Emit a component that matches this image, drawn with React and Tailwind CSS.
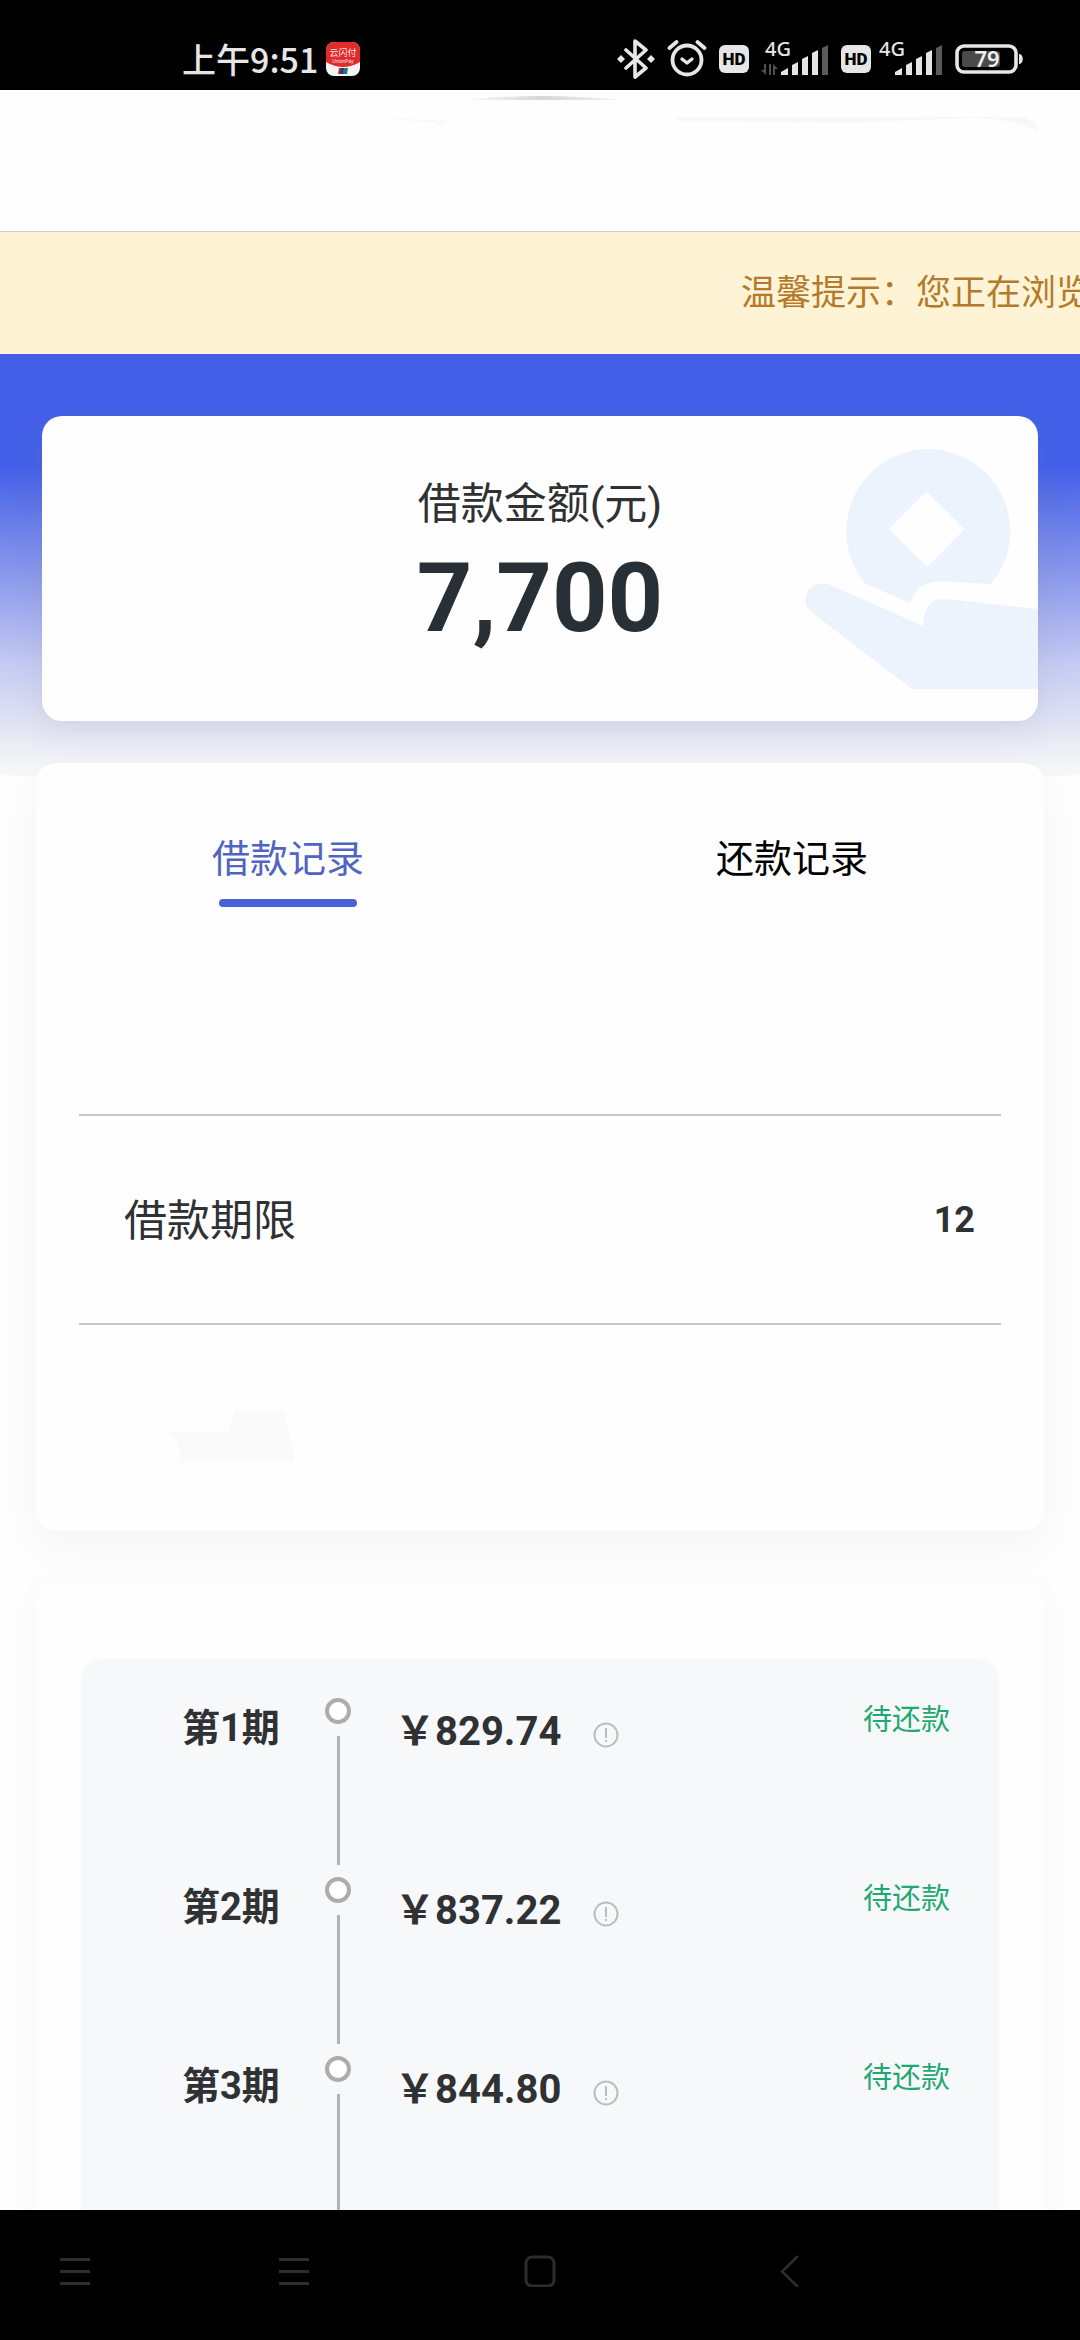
const installments = [
  { period: "第1期", amount: "829.74", status: "待还款" },
  { period: "第2期", amount: "837.22", status: "待还款" },
  { period: "第3期", amount: "844.80", status: "待还款" },
];

function AppBadge() {
  return (
    <svg className="size-[34px]" viewBox="0 0 34 34" aria-hidden="true">
      <rect width="34" height="34" rx="8" fill="#f4f4f4" />
      <path d="M0 20V8a8 8 0 0 1 8-8h18a8 8 0 0 1 8 8v12q-17 10-34 0Z" fill="#e02a2c" />
      <text x="17" y="14" textAnchor="middle" fontSize="9" fill="#fbe3e0" fontFamily="'Noto Sans CJK SC', sans-serif">
        云闪付
      </text>
      <text x="17" y="21" textAnchor="middle" fontSize="5" fill="#fbe3e0" fontFamily="Roboto, sans-serif">
        UnionPay
      </text>
      <path d="M13 26h4l-1 6h-4Z" fill="#b5303f" />
      <path d="M15 26h4l-1 6h-4Z" fill="#27406b" />
      <path d="M18 26h4l-1 6h-4Z" fill="#1f7a80" />
    </svg>
  );
}

function Bluetooth() {
  return (
    <svg className="h-[40px] w-[38px]" viewBox="0 0 38 40" fill="none" aria-hidden="true">
      <path d="M9 11l20 18-11 9V2l11 9L9 29" stroke="#e6e6e6" strokeWidth="3.6" strokeLinejoin="round" strokeLinecap="round" />
      <path d="M4 16l4 4-4 4-4-4ZM34 16l4 4-4 4-4-4Z" fill="#e6e6e6" />
    </svg>
  );
}

function Alarm() {
  return (
    <svg className="h-[40px] w-[40px]" viewBox="0 0 40 40" fill="none" stroke="#e6e6e6" strokeLinecap="round" strokeLinejoin="round" aria-hidden="true">
      <circle cx="20" cy="21" r="14.500" strokeWidth="3.800" />
      <path d="M15 20l5 4 5-4" strokeWidth="3.400" />
      <path d="M2.500 9l7-6M37.500 9l-7-6" strokeWidth="3.800" />
    </svg>
  );
}

function HdBadge() {
  return (
    <span className="flex h-7 w-[30px] items-center justify-center rounded-md bg-[#e6e6e6] text-[17px] leading-none font-black text-black">
      HD
    </span>
  );
}

function Signal({ data }) {
  return (
    <svg className={data ? "h-[42px] w-[68px]" : "h-[42px] w-[64px]"} viewBox={data ? "0 0 68 42" : "4 0 64 42"} aria-label="4G">
      <text x="4" y="18" fontSize="20" fontWeight="500" fill="#e6e6e6" fontFamily="'Noto Sans', sans-serif">
        4G
      </text>
      {data && <path d="M5 26v11l-5-5h3v-6ZM8 26v11h2V26ZM12 37V26l5 5h-3v6Z" fill="#505050" />}
      <path d="M20 37v-3l7-4v7ZM31 37V27l6-3v13ZM41 37V21l6-3v19ZM51 37V15l6-3v25Z" fill="#e6e6e6" />
      <path d="M61 37V10l6-3v30Z" fill="#5a5a5a" />
    </svg>
  );
}

function Battery() {
  return (
    <svg className="h-[30px] w-[68px]" viewBox="0 0 68 30" aria-label="79%">
      <rect x="2" y="2" width="59" height="26" rx="7" fill="none" stroke="#e6e6e6" strokeWidth="3.600" />
      <rect x="7" y="7" width="38" height="16" rx="3" fill="#4a4a4a" />
      <path d="M64 10c5 0 5 10 0 10Z" fill="#e6e6e6" />
      <text x="32" y="23" textAnchor="middle" fontSize="22" fontWeight="600" fill="#efefef" fontFamily="'Noto Sans', sans-serif">
        79
      </text>
    </svg>
  );
}

function StatusBar() {
  return (
    <header className="flex h-[90px] shrink-0 items-center justify-between bg-black pt-7 pr-[57px] pl-[182px]">
      <div className="flex items-center gap-2">
        <time className="text-[34px] leading-[34px] font-medium text-[#e6e6e6] [font-family:'Noto_Sans_CJK_SC',sans-serif]">
          上午9:51
        </time>
        <AppBadge />
      </div>
      <div className="flex items-center gap-3">
        <Bluetooth />
        <Alarm />
        <HdBadge />
        <Signal data />
        <div className="flex items-center gap-2">
          <HdBadge />
          <Signal />
        </div>
        <Battery />
      </div>
    </header>
  );
}

function CoinInHand() {
  return (
    <svg className="absolute top-8 right-0 h-[242px] w-[235px]" viewBox="130 112 705 726" aria-hidden="true">
      <path
        fill="#edf3fd"
        fillRule="evenodd"
        d="M318 520A246 246 0 1 1 694 520L545 512Q470 512 453 578ZM500 243 388 355 503 468 615 355Z"
      />
      <path fill="#edf3fd" d="M215 524 490 646Q494 564 550 564L835 595V836H458L155 605Q125 575 145 540 170 508 215 524Z" />
    </svg>
  );
}

function InfoIcon() {
  return (
    <svg className="size-[26px]" viewBox="0 0 26 26" fill="none" stroke="#bdbdbd" aria-hidden="true">
      <circle cx="13" cy="13" r="11.500" strokeWidth="2" />
      <path d="M13 6v10M13 18v2" strokeWidth="2" />
    </svg>
  );
}

function Installment({ period, amount, status }) {
  return (
    <li className="flex h-[179px] items-start pr-[49px] pl-[101px]">
      <span className="w-[143px] pt-[6px] text-[38px] leading-[48px] font-bold">{period}</span>
      <span className="flex w-[26px] shrink-0 flex-col items-center gap-3" aria-hidden="true">
        <i className="size-[26px] rounded-full border-4 border-[#acacac] bg-white" />
        <i className="h-[129px] w-[3px] bg-[#b3b3b3]" />
      </span>
      <span className="ml-11 flex items-start gap-8 pt-[10px] text-[40px] leading-[48px] font-bold">
        <span>￥{amount}</span>
        <button type="button" aria-label={period + "详情"} className="mt-[14px]">
          <InfoIcon />
        </button>
      </span>
      <span className="ml-auto pt-[2px] text-[29px] leading-[40px] text-[#1fa871]">{status}</span>
    </li>
  );
}

function NavBar() {
  return (
    <nav className="flex h-[130px] shrink-0 items-start bg-black pt-[45px] pl-[59px] text-[#2d2d2d]">
      <button type="button" aria-label="菜单" className="mr-[187px]">
        <svg className="size-8" viewBox="0 0 32 32" stroke="currentColor" strokeWidth="3">
          <path d="M1 4.500h30M1 16.500h30M1 28.500h30" />
        </svg>
      </button>
      <button type="button" aria-label="最近任务" className="mr-[214px]">
        <svg className="size-8" viewBox="0 0 32 32" stroke="currentColor" strokeWidth="3">
          <path d="M1 4.500h30M1 16.500h30M1 28.500h30" />
        </svg>
      </button>
      <button type="button" aria-label="主屏幕" className="mr-[218px]">
        <svg className="size-8" viewBox="0 0 32 32" fill="none" stroke="currentColor" strokeWidth="3">
          <rect x="2" y="2" width="28" height="29" rx="6" />
        </svg>
      </button>
      <button type="button" aria-label="返回">
        <svg className="size-8" viewBox="0 0 32 32" fill="none" stroke="currentColor" strokeWidth="2.600">
          <path d="M24 1 8 16.500 24 32" />
        </svg>
      </button>
    </nav>
  );
}

export default function App() {
  return (
    <div className="flex h-screen flex-col bg-[#fdfdfd] text-[#2f3133] [font-family:Roboto,'Noto_Sans_CJK_SC',sans-serif]">
      <StatusBar />
      <main className="min-h-0 flex-1 overflow-x-hidden overflow-y-auto [scrollbar-width:none]">
        <div className="h-[142px] border-b border-[#cfcbc8] bg-[#fefefe]">
          <svg className="h-[60px] w-full" viewBox="0 0 1080 60" aria-hidden="true">
            <defs>
              <linearGradient id="edge" x1="0" x2="1" y1="0" y2="0">
                <stop offset="0" stopColor="#d6d6d6" stopOpacity="0" />
                <stop offset="0.5" stopColor="#d6d6d6" />
                <stop offset="1" stopColor="#d6d6d6" stopOpacity="0.3" />
              </linearGradient>
            </defs>
            <path d="M460 10Q540 2 622 10Z" fill="url(#edge)" />
            <path d="M365 27 450 31 430 40 440 33ZM675 27H1025Q1036 30 1038 41 1010 28 970 28L850 33 680 31Z" fill="#f8f8f8" />
          </svg>
        </div>
        <div className="flex h-[122px] items-center overflow-hidden bg-[#fef3d5] pt-[2px] pl-[741px]">
          <p className="text-[35px] leading-[48px] whitespace-nowrap text-[#b47a2b]">温馨提示：您正在浏览</p>
        </div>

        <section className="rounded-[0_0_50%_50%/0_0_10px_10px] bg-[linear-gradient(#435fe8_26%,#8795eb_50%,#c6ccf2_73%,#e7e8f4_89%,#f5f6f7_97%)] px-[42px] py-[62px]">
          <div className="relative flex h-[305px] flex-col items-center overflow-hidden rounded-[20px] bg-[#fefefe] pt-[60px] shadow-[0_8px_30px_rgba(120,130,150,0.15)]">
            <CoinInHand />
            <h1 className="text-[43px] leading-[56px] font-normal">借款金额(元)</h1>
            <p className="mt-4 text-[97px] leading-[100px] font-bold text-[#283035]">7,700</p>
          </div>
        </section>

        <div className="relative -mt-5 px-9">
          <section className="h-[768px] rounded-[20px] bg-[#fefefe] px-[43px] pt-[68px] shadow-[0_16px_40px_rgba(0,0,0,0.03)]">
            <div role="tablist" className="-mx-[43px] grid grid-cols-2">
              <button type="button" role="tab" aria-selected="true" className="flex flex-col items-center gap-3 text-[38px] leading-[56px] text-[#5064c4]">
                借款记录
                <span className="h-2 w-[138px] rounded-full bg-[#4a62d6]" />
              </button>
              <button type="button" role="tab" aria-selected="false" className="self-start text-[38px] leading-[56px] text-black">
                还款记录
              </button>
            </div>
            <dl className="mt-[207px] flex h-[211px] items-center justify-between border-y-2 border-[#c6c6c6] pr-[26px] pl-[45px]">
              <dt className="pt-[2px] text-[43px] leading-[56px]">借款期限</dt>
              <dd className="text-[36px] leading-[48px] font-bold">12</dd>
            </dl>
            <svg className="mt-[85px] ml-[86px] h-[54px] w-[132px]" viewBox="0 0 132 54" aria-hidden="true">
              <path d="M0 21h64q2-12 6-21h49q3 22 10 36v16H15q2-22-15-31Z" fill="#fafafa" />
            </svg>
          </section>

          <section className="mt-[52px] rounded-[20px] bg-[#fefefe] px-[45px] pt-[76px] pb-[76px] shadow-[0_0_40px_rgba(0,0,0,0.02)]">
            <ol className="rounded-[20px] bg-[#f7f8fa] pt-[39px]">
              {installments.map((item) => (
                <Installment key={item.period} {...item} />
              ))}
            </ol>
          </section>
        </div>
      </main>
      <NavBar />
    </div>
  );
}
